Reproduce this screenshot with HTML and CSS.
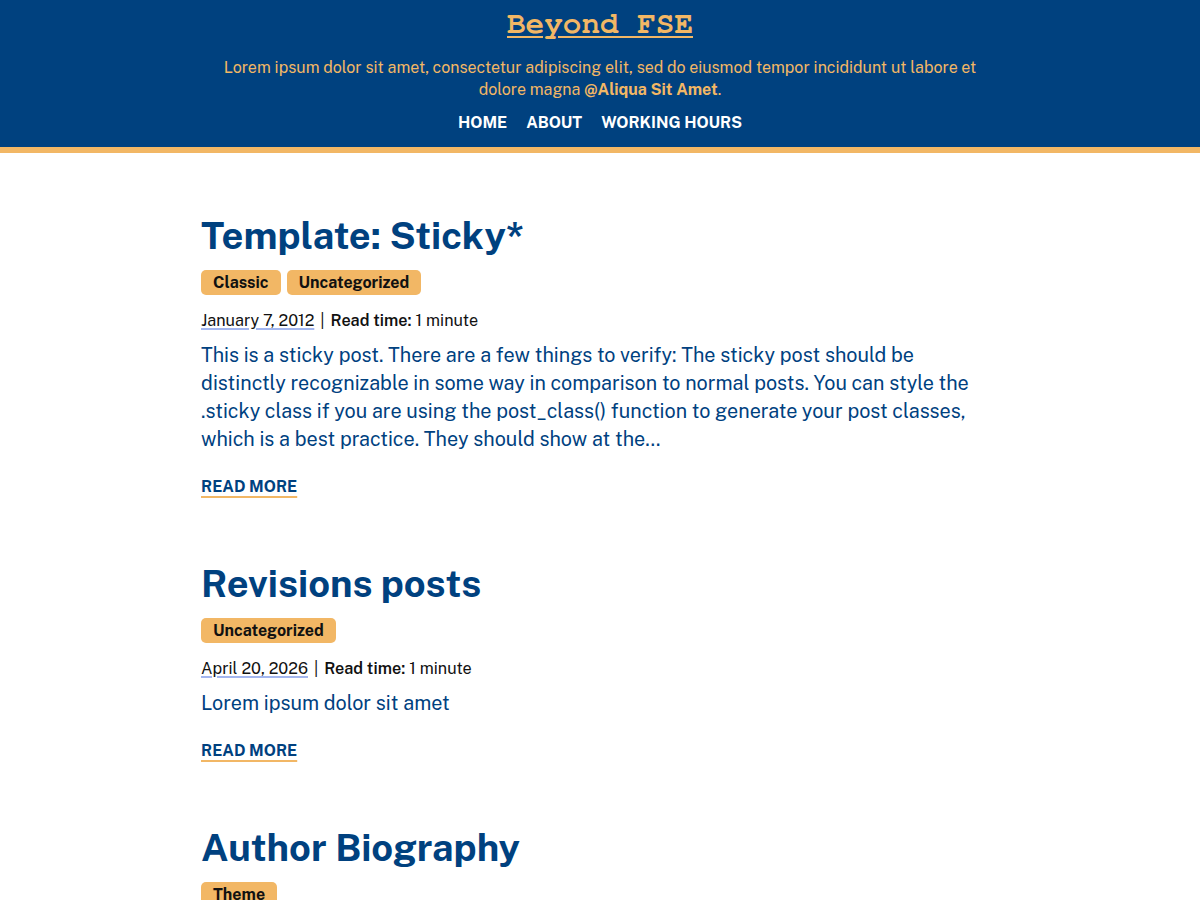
FILE: index.html
```html
<!DOCTYPE html>
<html lang="en">
<head>
<meta charset="utf-8">
<title>Beyond FSE</title>
<link rel="stylesheet" href="styles.css">
</head>
<body>
<header class="site-header">
  <div class="site-title"><a href="#">Beyond FSE</a></div>
  <p class="tagline">Lorem ipsum dolor sit amet, consectetur adipiscing elit, sed do eiusmod tempor incididunt ut labore et dolore magna <strong>@Aliqua Sit Amet</strong>.</p>
  <nav class="nav">
    <a href="#">HOME</a>
    <a href="#">ABOUT</a>
    <a href="#">WORKING HOURS</a>
  </nav>
</header>
<main class="main">
  <article class="post">
    <h2 class="post-title">Template: Sticky*</h2>
    <div class="tags"><span class="tag">Classic</span><span class="tag">Uncategorized</span></div>
    <div class="meta"><a class="date" href="#">January 7, 2012</a><span class="sep">|</span><span class="rt-label">Read time:</span> 1 minute</div>
    <p class="excerpt">This is a sticky post. There are a few things to verify: The sticky post should be distinctly recognizable in some way in comparison to normal posts. You can style the .sticky class if you are using the post_class() function to generate your post classes, which is a best practice. They should show at the…</p>
    <a class="more" href="#">READ MORE</a>
  </article>
  <article class="post">
    <h2 class="post-title">Revisions posts</h2>
    <div class="tags"><span class="tag">Uncategorized</span></div>
    <div class="meta"><a class="date" href="#">April 20, 2026</a><span class="sep">|</span><span class="rt-label">Read time:</span> 1 minute</div>
    <p class="excerpt">Lorem ipsum dolor sit amet</p>
    <a class="more" href="#">READ MORE</a>
  </article>
  <article class="post">
    <h2 class="post-title">Author Biography</h2>
    <div class="tags"><span class="tag">Theme</span></div>
  </article>
</main>
</body>
</html>
```
FILE: styles.css
```css
* { box-sizing: border-box; }
html, body { margin: 0; padding: 0; }
body {
  font-family: "Public Sans", Inter, "Noto Sans", sans-serif;
  background: #fff;
  color: #00417f;
}
.site-header {
  background: #00417f;
  border-bottom: 6px solid #f2b765;
  text-align: center;
  padding: 7px 0 13px;
}
.site-title {
  font-family: "Nimbus Mono PS", "Nimbus Mono L", "FreeMono", "Courier", "Liberation Mono", monospace;
  font-weight: bold;
  font-size: 31px;
  line-height: 34px;
}
.site-title a {
  font-family: inherit;
  color: #f2b765;
  text-decoration: underline;
  text-underline-offset: 3px;
  text-decoration-thickness: 2px;
}
.tagline {
  color: #f2b765;
  font-size: 16px;
  line-height: 22px;
  max-width: 780px;
  margin: 16px auto 0;
}
.tagline strong { font-weight: 700; }
.nav {
  display: flex;
  justify-content: center;
  gap: 19px;
  margin-top: 11px;
}
.nav a {
  color: #fff;
  font-weight: 700;
  font-size: 16px;
  line-height: 22px;
  text-decoration: none;
}
.main {
  width: 800px;
  margin: 0 auto;
  padding: 59px 0 0 1px;
}
.post { margin-bottom: 62px; }
.post-title {
  font-size: 38px;
  line-height: 48px;
  font-weight: 700;
  margin: 0;
  color: #00417f;
}
.tags { display: flex; gap: 6px; margin-top: 10px; }
.tag {
  background: #f2b765;
  color: #111;
  font-weight: 700;
  font-size: 16px;
  line-height: 25px;
  padding: 0 12px;
  border-radius: 5px;
}
.meta {
  margin-top: 14px;
  font-size: 16.2px;
  line-height: 24px;
  color: #111;
}
.date {
  color: #111;
  text-decoration: underline;
  text-decoration-color: #a3b6ef;
  text-decoration-thickness: 2px;
  text-underline-offset: 2px;
}
.sep { margin: 0 6px; color: #111; }
.rt-label { font-weight: 600; }
.excerpt {
  font-size: 19.75px;
  line-height: 28px;
  margin: 8px 0 0;
  color: #00417f;
}
.more {
  display: inline-block;
  margin-top: 23px;
  color: #00417f;
  font-weight: 700;
  font-size: 16px;
  line-height: 22px;
  text-decoration: underline;
  text-decoration-color: #f2b765;
  text-decoration-thickness: 2px;
  text-underline-offset: 4px;
}
```
